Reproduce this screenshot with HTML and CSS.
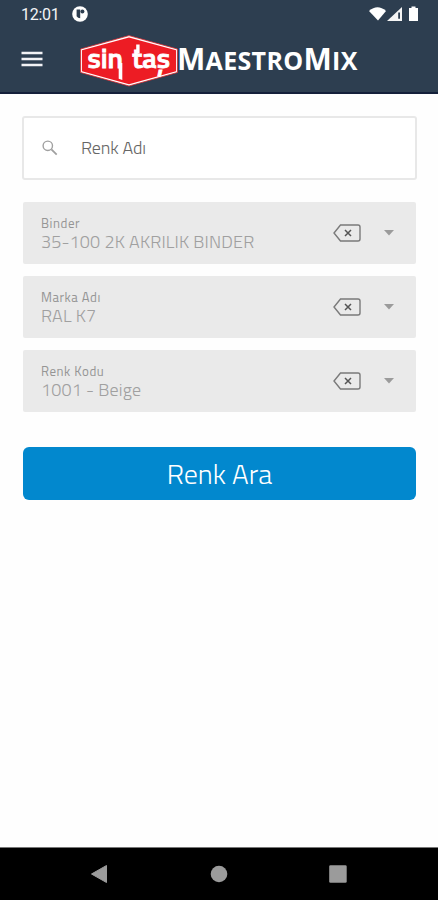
FILE: index.html
```html
<!DOCTYPE html>
<html lang="tr">
<head>
<meta charset="utf-8">
<meta name="viewport" content="width=device-width">
<title>MaestroMix</title>
<link rel="stylesheet" href="styles.css">
</head>
<body>
<header class="header">
  <div class="status">
    <span class="clock">12:01</span>
    <svg class="notice" width="16" height="16" viewBox="0 0 16 16"><circle cx="8" cy="8" r="7.8" fill="#fff"/><path d="M4.6 3.5H8.2v8.7a4.3 4.3 0 0 1-3.6-2z" fill="#2d3e50"/><circle cx="10.4" cy="5.6" r="2" fill="#2d3e50"/></svg>
    <svg class="signals" width="52" height="18" viewBox="0 0 52 18"><path d="M0 6Q8.5 -1.5 17 6L9 15.5z" fill="#fff"/><path d="M33 2v14H18z" fill="#f5f5f5"/><path d="M29.2 7.5h1.8v6.2h-1.8z" fill="#2d3e50"/><path d="M42.5 1.5h4v1.6H49V16h-9V3.1h2.5z" fill="#fff"/></svg>
  </div>
  <div class="toolbar">
    <svg class="menu" width="22" height="16" viewBox="0 0 22 16"><path d="M.5 2h21M.5 8h21M.5 14h21" stroke="#f2f2f5" stroke-width="2.5"/></svg>
    <svg class="logo" width="98" height="52" viewBox="0 0 98 52">
      <path d="M49 .6L97.4 14v23.5L49 51L.6 37.5V14z" fill="#fff" stroke="#d9242a" stroke-width=".8"/>
      <path d="M49 2.4L96 15.2v21.1L49 49.3L2 36.3V15.2z" fill="#ed1c24"/>
      <g class="logo-text" transform="translate(0 32.5) scale(1 1.12)"><text x="7.5" y="0" textLength="35.5" lengthAdjust="spacingAndGlyphs">sin</text><text x="52" y="0" textLength="38" lengthAdjust="spacingAndGlyphs">taş</text></g>
      <path d="M38.7 28h3.6v17l-3.6-1.2z" fill="#fff"/>
      <path d="M56.2 9.5h3.4v9h-3.4zM56.5 30.4h7v2.3h-7z" fill="#fff"/>
    </svg>
    <h1 class="brand"><span class="cap">M</span>AESTRO<span class="cap">M</span>IX</h1>
  </div>
</header>
<main class="content">
  <div class="search">
    <svg width="16" height="16" viewBox="0 0 16 16" fill="none" stroke="#a0a0a0"><circle cx="5.8" cy="5.8" r="4.7" stroke-width="1.4"/><path d="M9.4 9.4l5.3 5.3" stroke-width="1.8"/></svg>
    <span class="placeholder">Renk Adı</span>
  </div>
  <div class="fields">
    <div class="field">
      <div class="texts"><span class="label">Binder</span><span class="value">35-100 2K AKRILIK BINDER</span></div>
      <svg class="clear" width="28" height="18" viewBox="0 0 28 18"><path d="M7.5 1H25q2 0 2 2v12q0 2-2 2H7.5L1 9z"/><path class="cross" d="M12 6l6 6m0-6l-6 6"/></svg>
      <svg class="arrow" width="10" height="6" viewBox="0 0 10 6"><path d="M0 0h10L5 5.5z"/></svg>
    </div>
    <div class="field">
      <div class="texts"><span class="label">Marka Adı</span><span class="value">RAL K7</span></div>
      <svg class="clear" width="28" height="18" viewBox="0 0 28 18"><path d="M7.5 1H25q2 0 2 2v12q0 2-2 2H7.5L1 9z"/><path class="cross" d="M12 6l6 6m0-6l-6 6"/></svg>
      <svg class="arrow" width="10" height="6" viewBox="0 0 10 6"><path d="M0 0h10L5 5.5z"/></svg>
    </div>
    <div class="field">
      <div class="texts"><span class="label">Renk Kodu</span><span class="value">1001 - Beige</span></div>
      <svg class="clear" width="28" height="18" viewBox="0 0 28 18"><path d="M7.5 1H25q2 0 2 2v12q0 2-2 2H7.5L1 9z"/><path class="cross" d="M12 6l6 6m0-6l-6 6"/></svg>
      <svg class="arrow" width="10" height="6" viewBox="0 0 10 6"><path d="M0 0h10L5 5.5z"/></svg>
    </div>
  </div>
  <button class="submit"><span>Renk Ara</span></button>
</main>
<nav class="navbar">
  <svg width="18" height="20" viewBox="0 0 18 20"><path d="M1.5 10L16.5 1.5v17z" fill="#9b9b9b" stroke="#9b9b9b" stroke-linejoin="round"/></svg>
  <svg width="18" height="20" viewBox="0 0 18 20"><circle cx="9" cy="10" r="8.3" fill="#9b9b9b"/></svg>
  <svg width="18" height="20" viewBox="0 0 18 20"><rect x=".2" y="1.3" width="17.5" height="17.5" rx="1.3" fill="#9b9b9b"/></svg>
</nav>
</body>
</html>
```
FILE: styles.css
```css
* { box-sizing: border-box; }
body {
  margin: 0;
  height: 900px;
  display: flex;
  flex-direction: column;
  background: #fefefe;
  font-family: "Titillium Web", Roboto, sans-serif;
  overflow: hidden;
}
svg { display: block; flex: none; }
.header { height: 94px; background: #2d3e50; border-bottom: 2px solid #14203a; }
.status { height: 28px; display: flex; align-items: center; padding: 0 17px 0 21px; }
.clock { width: 51px; padding-top: 1px; font: 16px/28px Roboto, sans-serif; color: #f3f4f6; letter-spacing: -.3px; }
.signals { margin-left: auto; }
.toolbar { display: flex; align-items: center; height: 64px; padding: 2px 0 0 21px; }
.menu { margin-right: 37px; margin-top: -5px; }
.logo { margin-top: -1px; }
.logo-text { font: 600 24px "Titillium Web", Roboto, sans-serif; fill: #fff; stroke: #fff; stroke-width: .7px; }
.brand { margin: -3px 0 0 -1px; font: 700 25px/40px "Open Sans", sans-serif; color: #fff; letter-spacing: .32px; white-space: nowrap; }
.cap { font-size: 30px; }
.content { flex: 1; padding: 22px 21px 0 22px; }
.search {
  height: 64px; display: flex; align-items: center; gap: 23px; padding: 0 18px 1px 18px;
  background: #fff; border: 2px solid #e8e8e8; border-radius: 3px;
}
.placeholder { font-size: 18px; font-weight: 300; color: #666; letter-spacing: -.1px; }
.fields { display: grid; gap: 12px; margin-top: 22px; }
.field { height: 62px; display: flex; align-items: center; padding: 0 22px 0 18px; margin: 0 1px; background: #eaeaea; border-radius: 2px; }
.texts { flex: 1; display: flex; flex-direction: column; padding-top: 1px; white-space: nowrap; }
.label { font-size: 13px; line-height: 17px; color: #959595; letter-spacing: .55px; }
.value { font-size: 18px; line-height: 20px; font-weight: 300; color: #a0a0a0; letter-spacing: .15px; }
.clear { fill: none; stroke: #7a7a7a; stroke-width: 1.4; margin-right: 23px; }
.cross { stroke: #555; stroke-width: 1.5; }
.arrow { fill: #9b9b9b; }
.submit {
  display: flex; align-items: center; justify-content: center;
  width: calc(100% - 2px); height: 53px; margin: 35px 1px 0; padding: 0;
  border: 0; border-radius: 6px; background: #0288ce; color: #fff;
  font: 300 28px "Titillium Web", Roboto, sans-serif;
}
.navbar { height: 53px; background: #000; border-top: 1px solid #777; display: flex; justify-content: space-between; align-items: center; padding: 0 91px 0 90px; }
```
